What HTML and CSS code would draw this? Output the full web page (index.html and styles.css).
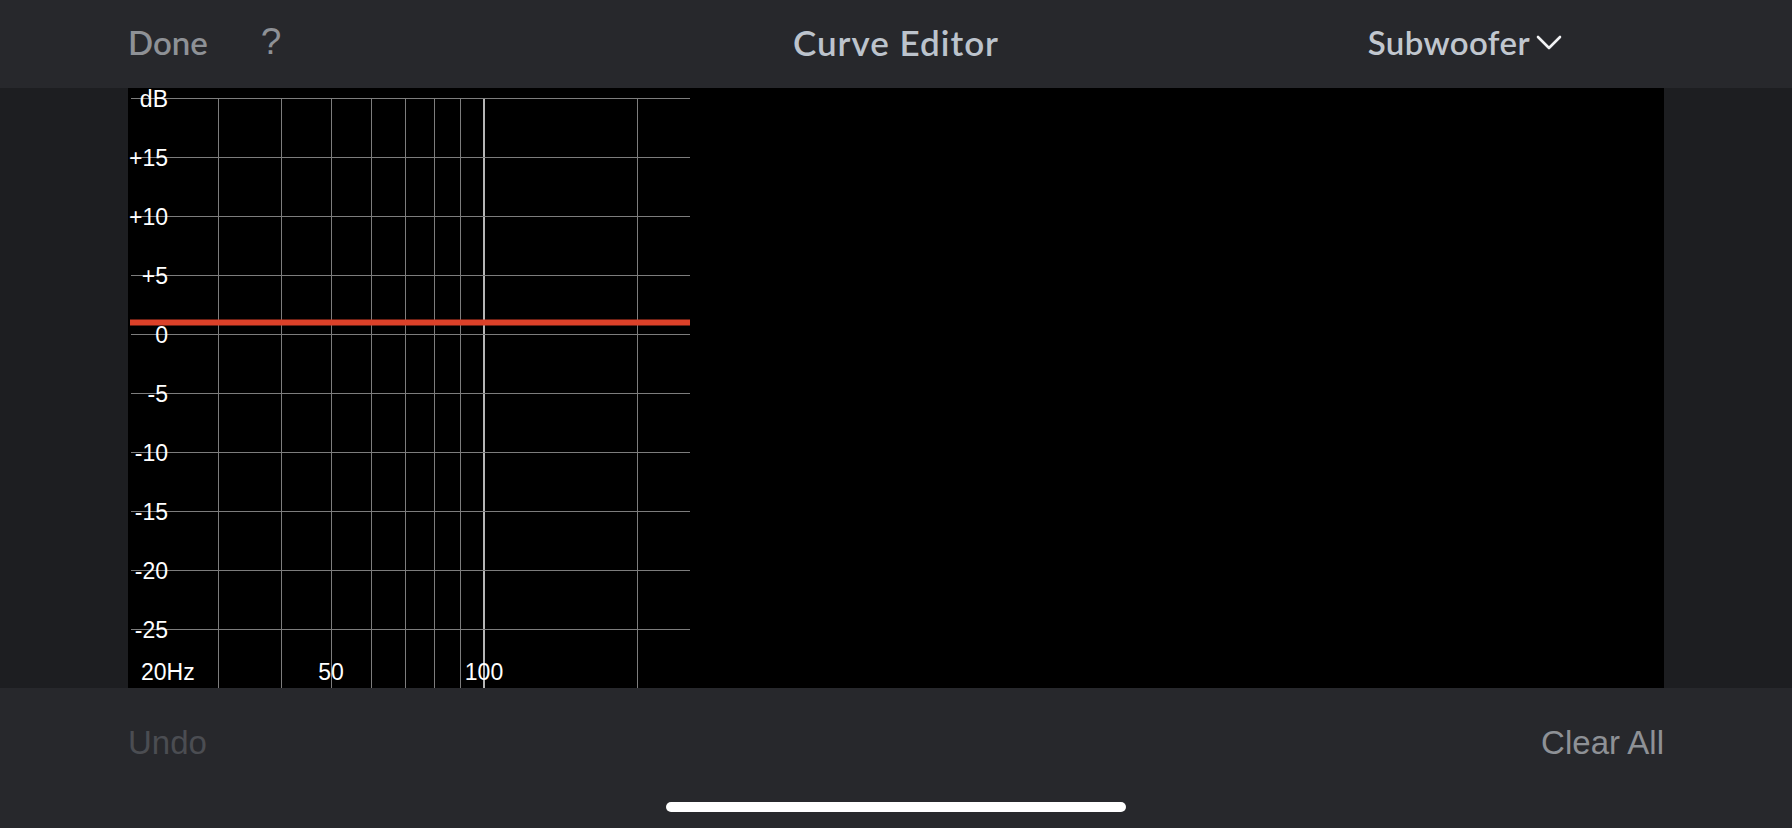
FILE: index.html
```html
<!DOCTYPE html>
<html lang="en">
<head>
    <meta charset="UTF-8">
    <meta name="viewport" content="width=device-width, initial-scale=1.0">
    <title>Curve Editor</title>
    <link rel="stylesheet" href="styles.css">
</head>
<body>
    <div class="screen">
        <header class="topbar">
            <div class="topbar-left">
                <span class="btn-done">Done</span>
                <span class="btn-help">?</span>
            </div>
            <h1 class="title">Curve Editor</h1>
            <div class="topbar-right">
                <span class="speaker">Subwoofer</span>
                <svg class="chevron" width="26" height="16" viewBox="0 0 26 16">
                    <polyline points="2,2 13,13 24,2" fill="none" stroke="#f2f3f5" stroke-width="2.6" stroke-linecap="round" stroke-linejoin="round"/>
                </svg>
            </div>
        </header>

        <main class="stage">
            <div class="chart">
                <svg class="plot" width="562" height="600" viewBox="0 0 562 600">
                    <!-- frequency lines (log scale) -->
                    <g class="grid">
                        <line x1="90.5" y1="10" x2="90.5" y2="600"/>
                        <line x1="153.5" y1="10" x2="153.5" y2="600"/>
                        <line x1="203.5" y1="10" x2="203.5" y2="600"/>
                        <line x1="243.5" y1="10" x2="243.5" y2="600"/>
                        <line x1="277.5" y1="10" x2="277.5" y2="600"/>
                        <line x1="306.5" y1="10" x2="306.5" y2="600"/>
                        <line x1="332.5" y1="10" x2="332.5" y2="600"/>
                        <line x1="509.5" y1="10" x2="509.5" y2="600"/>
                    </g>
                    <line class="grid-major" x1="356" y1="10" x2="356" y2="600"/>
                    <!-- dB lines -->
                    <g class="grid">
                        <line x1="3" y1="10.5" x2="562" y2="10.5"/>
                        <line x1="3" y1="69.5" x2="562" y2="69.5"/>
                        <line x1="3" y1="128.5" x2="562" y2="128.5"/>
                        <line x1="3" y1="187.5" x2="562" y2="187.5"/>
                        <line x1="3" y1="246.5" x2="562" y2="246.5"/>
                        <line x1="3" y1="305.5" x2="562" y2="305.5"/>
                        <line x1="3" y1="364.5" x2="562" y2="364.5"/>
                        <line x1="3" y1="423.5" x2="562" y2="423.5"/>
                        <line x1="3" y1="482.5" x2="562" y2="482.5"/>
                        <line x1="3" y1="541.5" x2="562" y2="541.5"/>
                    </g>
                    <g class="axis-y">
                        <text x="40" y="19">dB</text>
                        <text x="40" y="78">+15</text>
                        <text x="40" y="137">+10</text>
                        <text x="40" y="196">+5</text>
                        <text x="40" y="255">0</text>
                        <text x="40" y="314">-5</text>
                        <text x="40" y="373">-10</text>
                        <text x="40" y="432">-15</text>
                        <text x="40" y="491">-20</text>
                        <text x="40" y="550">-25</text>
                    </g>
                    <g class="axis-x">
                        <text x="13" y="592">20Hz</text>
                        <text class="mid" x="203" y="592">50</text>
                        <text class="mid" x="356" y="592">100</text>
                    </g>
                    <line class="curve" x1="2" y1="234.5" x2="562" y2="234.5"/>
                </svg>
            </div>
        </main>

        <footer class="toolbar">
            <div class="actions">
                <span class="btn-undo">Undo</span>
                <span class="btn-clear">Clear All</span>
            </div>
            <div class="home-bar"></div>
        </footer>
    </div>
</body>
</html>
```

FILE: styles.css
```css
body {
    margin: 0;
    background-color: #27282c;
    font-family: Lato, "Open Sans", sans-serif;
}
.screen {
    width: 1792px;
    height: 828px;
    display: flex;
    flex-direction: column;
    overflow: hidden;
}
.topbar {
    height: 88px;
    flex-shrink: 0;
    display: grid;
    grid-template-columns: 1fr auto 1fr;
    align-items: center;
    padding: 0 128px 5px;
    box-sizing: border-box;
    background-color: #27282c;
}
.topbar-left {
    display: flex;
    align-items: center;
    gap: 53px;
}
.btn-done {
    font-size: 33px;
    font-weight: 600;
    color: #8e9196;
    line-height: 40px;
}
.btn-help {
    font-family: "Liberation Sans", sans-serif;
    font-size: 37px;
    color: #8e9196;
    line-height: 40px;
}
.title {
    margin: 0;
    font-size: 35px;
    font-weight: 600;
    color: #bcc3cc;
    line-height: 40px;
    letter-spacing: 1px;
}
.topbar-right {
    justify-self: end;
    margin-right: 102px;
    display: flex;
    align-items: center;
    gap: 6px;
}
.speaker {
    font-size: 33px;
    font-weight: 600;
    color: #c1c7cf;
    line-height: 40px;
    letter-spacing: 0.4px;
}
.chevron {
    display: block;
    margin-top: 2px;
}
.stage {
    height: 600px;
    flex-shrink: 0;
    display: flex;
    padding: 0 128px;
    background-color: #1d1e21;
}
.chart {
    flex: 1;
    background-color: #000;
}
.plot {
    display: block;
}
.grid line {
    stroke: #7d7d7d;
    stroke-width: 1;
}
.grid-major {
    stroke: #b5b5b5;
    stroke-width: 2;
}
.curve {
    stroke: #dc4129;
    stroke-width: 6;
}
.plot text {
    font-family: "Liberation Sans", Arial, sans-serif;
    font-size: 23px;
    fill: #fff;
}
.axis-y text {
    text-anchor: end;
}
.axis-x .mid {
    text-anchor: middle;
}
.toolbar {
    flex: 1;
    display: flex;
    flex-direction: column;
    align-items: center;
    background-color: #27282c;
}
.actions {
    width: 1536px;
    display: flex;
    justify-content: space-between;
    margin-top: 36px;
    font-family: "Liberation Sans", Arial, sans-serif;
    font-size: 33px;
    line-height: 38px;
}
.btn-undo {
    color: #4b4d52;
}
.btn-clear {
    color: #8e9196;
}
.home-bar {
    width: 460px;
    height: 10px;
    margin-top: 40px;
    border-radius: 5px;
    background-color: #fff;
}
```
